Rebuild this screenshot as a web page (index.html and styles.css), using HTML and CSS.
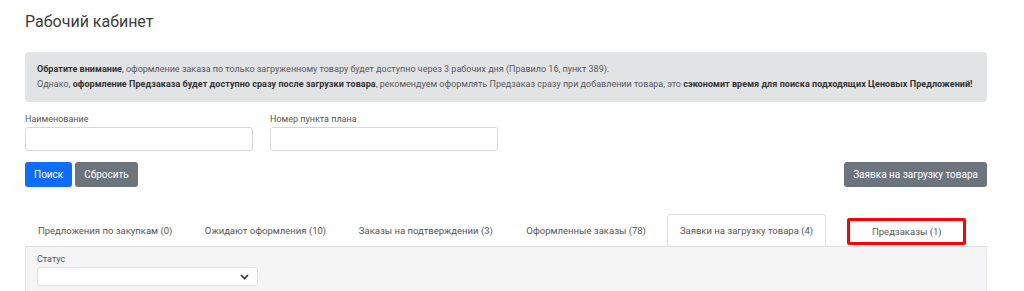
FILE: index.html
```html
<!DOCTYPE html>
<html lang="ru">
<head>
    <meta charset="UTF-8">
    <meta name="viewport" content="width=device-width, initial-scale=1.0">
    <title>Рабочий кабинет</title>
    <link rel="stylesheet" href="styles.css">
</head>
<body>
    <div class="container">
        <h1 class="page-title">Рабочий кабинет</h1>

        <div class="alert">
            <p><b>Обратите внимание</b>, оформление заказа по только загруженному товару будет доступно через 3 рабочих дня (Правило 16, пункт 389).</p>
            <p>Однако, <b>оформление Предзаказа будет доступно сразу после загрузки товара</b>, рекомендуем оформлять Предзаказ сразу при добавлении товара, это <b>сэкономит время для поиска подходящих Ценовых Предложений!</b></p>
        </div>

        <form class="filters">
            <div class="field">
                <label for="name">Наименование</label>
                <input id="name" type="text">
            </div>
            <div class="field">
                <label for="plan">Номер пункта плана</label>
                <input id="plan" type="text">
            </div>
        </form>

        <div class="actions">
            <div class="actions-left">
                <button class="btn btn-primary">Поиск</button>
                <button class="btn btn-secondary">Сбросить</button>
            </div>
            <button class="btn btn-secondary">Заявка на загрузку товара</button>
        </div>

        <ul class="tabs">
            <li class="tab"><a>Предложения по закупкам (0)</a></li>
            <li class="tab"><a>Ожидают оформления (10)</a></li>
            <li class="tab"><a>Заказы на подтверждении (3)</a></li>
            <li class="tab"><a>Оформленные заказы (78)</a></li>
            <li class="tab active"><a>Заявки на загрузку товара (4)</a></li>
            <li class="tab marked"><a>Предзаказы (1)</a></li>
        </ul>

        <div class="tab-panel">
            <label class="panel-label">Статус</label>
            <div class="select">
                <svg width="9" height="6" viewBox="0 0 9 6"><path d="M1 1l3.5 3.5L8 1" fill="none" stroke="#333" stroke-width="1.6"/></svg>
            </div>
        </div>
    </div>
</body>
</html>
```

FILE: styles.css
```css
body {
    margin: 0;
    font-family: Roboto, "Liberation Sans", sans-serif;
    color: #333;
    background: #fff;
}

.container {
    width: 962px;
    padding-left: 25px;
}

.page-title {
    margin: 12px 0 20px;
    font-size: 16px;
    line-height: 20px;
    font-weight: 400;
    color: #3c3c3c;
}

.alert {
    background: #e2e3e5;
    border-radius: 4px;
    padding: 10px 12px;
    height: 30px;
    font-size: 9px;
    line-height: 15px;
    color: #5a5a5a;
}

.alert p {
    margin: 0;
    white-space: nowrap;
}

.alert b {
    color: #333;
    letter-spacing: 0.05px;
}

.filters {
    display: grid;
    grid-template-columns: 228px 228px;
    gap: 17px;
    margin: 11px 0 0;
}

.field label {
    display: block;
    font-size: 9px;
    line-height: 12px;
    color: #555;
    margin-bottom: 2px;
}

.field input {
    display: block;
    box-sizing: border-box;
    width: 100%;
    height: 24px;
    border: 1px solid #d4d7db;
    border-radius: 3px;
    margin: 0;
}

.actions {
    display: flex;
    justify-content: space-between;
    margin-top: 11px;
}

.actions-left {
    display: flex;
    gap: 3px;
}

.btn {
    height: 25px;
    border: none;
    border-radius: 3px;
    padding: 0 9px;
    font-family: inherit;
    font-size: 10px;
    color: #fff;
}

.btn-primary {
    background: #0d6efd;
}

.btn-secondary {
    background: #6c757d;
}

.tabs {
    display: grid;
    grid-template-columns: repeat(6, 1fr);
    list-style: none;
    margin: 27px 0 0;
    padding: 0;
    height: 32px;
}

.tab {
    display: flex;
    align-items: center;
    justify-content: center;
    font-size: 9.5px;
    color: #555;
}

.tab.active {
    background: #fff;
    border: 1px solid #dee2e6;
    border-bottom: none;
    border-radius: 4px 4px 0 0;
    margin: 0 1px;
}

.tab.marked a {
    box-sizing: border-box;
    display: flex;
    align-items: center;
    justify-content: center;
    width: 119px;
    height: 27px;
    margin-top: 3px;
    border: 3px solid #f00;
    border-radius: 2px;
}

.tab-panel {
    background: #f5f5f5;
    border: 1px solid #dee2e6;
    border-bottom: none;
    height: 33px;
    padding: 6px 11px;
}

.panel-label {
    display: block;
    font-size: 9px;
    line-height: 12px;
    color: #555;
    margin-bottom: 2px;
}

.select {
    box-sizing: border-box;
    width: 221px;
    height: 19px;
    background: #fff;
    border: 1px solid #dee2e6;
    border-radius: 3px;
    display: flex;
    align-items: center;
    justify-content: flex-end;
    padding-right: 8px;
}
```
